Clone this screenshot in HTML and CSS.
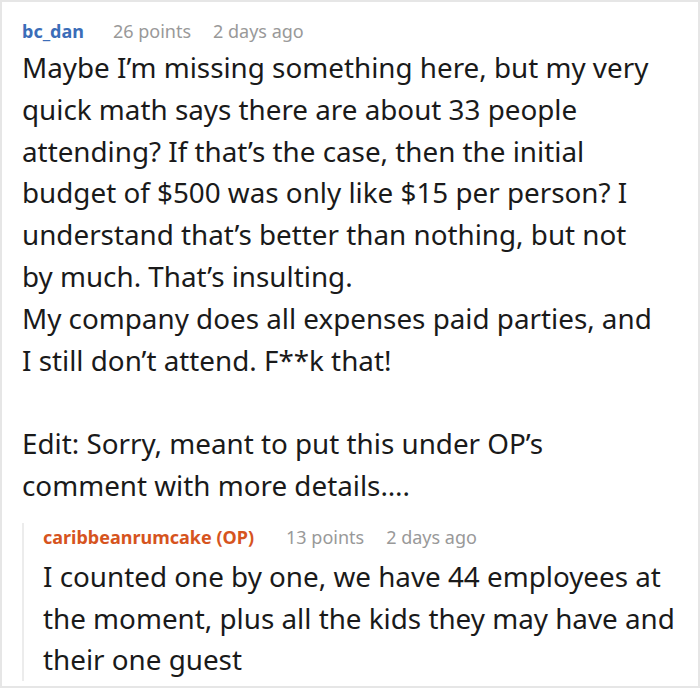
FILE: index.html
```html
<!DOCTYPE html>
<html>
<head>
<meta charset="utf-8">
<link rel="stylesheet" href="styles.css">
</head>
<body>
<div class="frame">
  <div class="comment">
    <div class="meta">
      <span class="author">bc_dan</span>
      <span class="info">26 points</span>
      <span class="info">2 days ago</span>
    </div>
    <div class="body main">
      <p>Maybe I’m missing something here, but my very quick math says there are about 33 people attending? If that’s the case, then the initial budget of $500 was only like $15 per person? I understand that’s better than nothing, but not by much. That’s insulting.<br>My company does all expenses paid parties, and I still don’t attend. F**k that!</p>
      <p>Edit: Sorry, meant to put this under OP’s comment with more details….</p>
    </div>
    <div class="reply">
      <div class="meta">
        <span class="author op">caribbeanrumcake (OP)</span>
        <span class="info">13 points</span>
        <span class="info">2 days ago</span>
      </div>
      <div class="body">
        <p>I counted one by one, we have 44 employees at the moment, plus all the kids they may have and their one guest</p>
      </div>
    </div>
  </div>
</div>
</body>
</html>
```

FILE: styles.css
```css
html, body {
  margin: 0;
  padding: 0;
  background: #fff;
}
body {
  font-family: "Noto Sans", "Open Sans", sans-serif;
  color: #1a1a1a;
}
.frame {
  box-sizing: border-box;
  width: 700px;
  height: 688px;
  border: 2px solid #e6e6e6;
  overflow: hidden;
}
.comment {
  padding: 15px 8px 0 20px;
}
.meta {
  display: flex;
  gap: 22px;
  font-size: 18px;
  line-height: 29px;
  align-items: baseline;
}
.author {
  font-weight: 700;
  color: #3b6db8;
  margin-right: 7px;
}
.author.op {
  color: #d6541e;
  margin-right: 10px;
}
.info {
  color: #999;
}
.body {
  margin-top: 1px;
  font-size: 27.8px;
  line-height: 41.8px;
}
.body.main {
  padding-right: 32px;
}
.body p {
  margin: 0 0 41.8px 0;
}
.body p:last-child {
  margin-bottom: 0;
}
.reply {
  margin-top: 16px;
  border-left: 2px solid #ececec;
  padding-left: 19px;
}
.reply .body {
  margin-top: 4px;
}
```
